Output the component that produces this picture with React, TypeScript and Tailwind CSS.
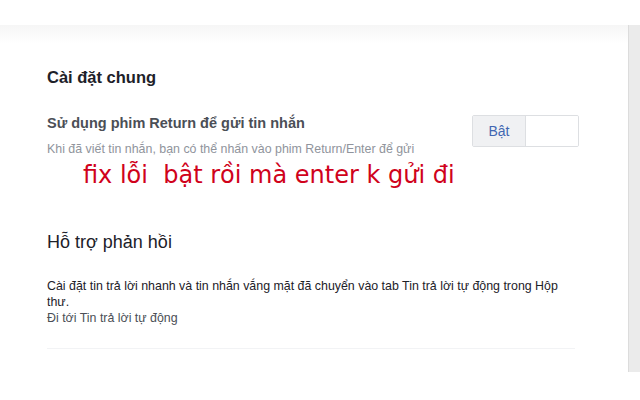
import React from "react";

export default function App() {
  return (
    <div className="w-[640px] h-[400px] bg-white overflow-hidden flex flex-col" style={{ fontFamily: '"Liberation Sans", Arial, sans-serif' }}>
      <div className="h-[25px] bg-white shrink-0" />
      <div className="flex flex-1">
        <div className="flex-1 flex flex-col">
          <div className="h-[18px] bg-gradient-to-b from-[#f6f6f6] to-white" />
          <div className="pl-[47px] pr-[49px] flex flex-col">
            <div className="mt-[24px] text-[16.5px] leading-[20px] font-bold text-[#1d2129]">Cài đặt chung</div>
            <div className="mt-[28px] flex justify-between">
              <div className="flex flex-col">
                <div className="text-[14.5px] leading-[17px] font-bold text-[#4b4f56]">Sử dụng phim Return để gửi tin nhắn</div>
                <div className="mt-[9px] text-[12.4px] leading-[16px] text-[#90949c]">Khi đã viết tin nhắn, bạn có thể nhấn vào phim Return/Enter để gửi</div>
                <div className="mt-[4px] ml-[36px] text-[24px] leading-[28px] text-[#d0021b]" style={{ fontFamily: '"DejaVu Sans", Verdana, sans-serif' }}>fix lỗi&nbsp; bật rồi mà enter k gửi đi</div>
              </div>
              <div className="flex h-[32px] w-[107px] border border-[#dddfe2] rounded-[2px] overflow-hidden shrink-0">
                <div className="w-[53px] bg-[#f0f1f3] border-r border-[#dddfe2] flex items-center justify-center text-[14px] text-[#4267b2]">Bật</div>
                <div className="flex-1 bg-white" />
              </div>
            </div>
            <div className="mt-[42px] text-[18px] leading-[22px] text-[#1d2129]">Hỗ trợ phản hồi</div>
            <div className="mt-[25px] w-[530px] text-[12.4px] leading-[16px] text-[#1d2129]">
              Cài đặt tin trả lời nhanh và tin nhắn vắng mặt đã chuyển vào tab Tin trả lời tự động trong Hộp thư.
            </div>
            <div className="text-[12.4px] leading-[16px] text-[#4b4f56]">Đi tới Tin trả lời tự động</div>
            <div className="mt-[22px] h-px bg-[#f2f3f5] w-[528px]" />
          </div>
        </div>
        <div className="w-[12px] h-[347px] bg-[#ebebeb] border-l border-[#dcdcdc] shrink-0" />
      </div>
    </div>
  );
}
